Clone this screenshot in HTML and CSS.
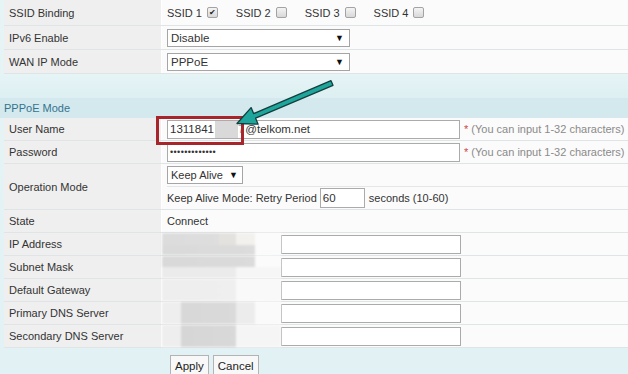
FILE: index.html
```html
<!DOCTYPE html>
<html lang="en">
<head>
    <meta charset="UTF-8">
    <title>WAN Settings</title>
    <link rel="stylesheet" href="styles.css">
</head>
<body>
    <div class="page">
        <div class="panel">
            <div class="row first">
                <div class="label">SSID Binding</div>
                <div class="value">
                    <span class="ssid">SSID 1</span><span class="cb checked">&#10004;</span>
                    <span class="ssid">SSID 2</span><span class="cb"></span>
                    <span class="ssid">SSID 3</span><span class="cb"></span>
                    <span class="ssid">SSID 4</span><span class="cb"></span>
                </div>
            </div>
            <div class="row mid">
                <div class="label">IPv6 Enable</div>
                <div class="value"><div class="sel wide"><span>Disable</span><span class="arrow">&#9660;</span></div></div>
            </div>
            <div class="row mid">
                <div class="label">WAN IP Mode</div>
                <div class="value"><div class="sel wide"><span>PPPoE</span><span class="arrow">&#9660;</span></div></div>
            </div>
        </div>

        <div class="gap"></div>
        <div class="section-title">PPPoE Mode</div>

        <div class="panel">
            <div class="row">
                <div class="label">User Name</div>
                <div class="value">
                    <div class="textbox long">1311841<span class="hidden-part"></span><span class="tail">7</span>@telkom.net</div>
                    <span class="hint"><span class="star">*</span> (You can input 1-32 characters)</span>
                </div>
            </div>
            <div class="row">
                <div class="label">Password</div>
                <div class="value">
                    <div class="textbox long"><span class="dots">&bull;&bull;&bull;&bull;&bull;&bull;&bull;&bull;&bull;&bull;&bull;&bull;&bull;</span></div>
                    <span class="hint"><span class="star">*</span> (You can input 1-32 characters)</span>
                </div>
            </div>
            <div class="row tall">
                <div class="label">Operation Mode</div>
                <div class="value stack">
                    <div class="sub">
                        <div class="sel short"><span>Keep Alive</span><span class="arrow">&#9660;</span></div>
                    </div>
                    <div class="sub">
                        Keep Alive Mode: Retry Period
                        <div class="textbox retry">60</div>
                        seconds (10-60)
                    </div>
                </div>
            </div>
            <div class="row">
                <div class="label">State</div>
                <div class="value">Connect</div>
            </div>
            <div class="row">
                <div class="label">IP Address</div>
                <div class="value flat"><div class="redact r1"></div><div class="textbox addr"></div></div>
            </div>
            <div class="row">
                <div class="label">Subnet Mask</div>
                <div class="value flat"><div class="redact r2"></div><div class="textbox addr"></div></div>
            </div>
            <div class="row">
                <div class="label">Default Gateway</div>
                <div class="value flat"><div class="redact r3"></div><div class="textbox addr"></div></div>
            </div>
            <div class="row">
                <div class="label">Primary DNS Server</div>
                <div class="value flat"><div class="redact r4"></div><div class="textbox addr"></div></div>
            </div>
            <div class="row">
                <div class="label">Secondary DNS Server</div>
                <div class="value flat"><div class="redact r5"></div><div class="textbox addr"></div></div>
            </div>
        </div>

        <div class="actions">
            <button type="button">Apply</button>
            <button type="button">Cancel</button>
        </div>

        <div class="highlight"></div>
        <svg class="pointer" width="628" height="374" viewBox="0 0 628 374">
            <polygon points="331,80.7 253.6,113.6 251.1,107.6 237,123.5 258.1,124.2 255.6,118.2 333,85.3" fill="#1ea69c" stroke="#123f3d" stroke-width="1.3" stroke-linejoin="round"/>
        </svg>
    </div>
</body>
</html>
```

FILE: styles.css
```css
body {
    margin: 0;
    font-family: "Liberation Sans", Arial, sans-serif;
    font-size: 11px;
    color: #333;
    background-color: #e4f2f4;
}
.page {
    position: relative;
    width: 628px;
    height: 374px;
    overflow: hidden;
    background: linear-gradient(#e6f4f6, #e2f1f3);
}
.panel {
    margin-left: 4px;
}
.row {
    display: grid;
    grid-template-columns: 158px 1fr;
    height: 23px;
    box-sizing: border-box;
    border-bottom: 1px solid #dfe5e7;
}
.row.first {
    height: 26px;
}
.row.mid {
    height: 24px;
}
.row.tall {
    height: 46px;
}
.label {
    display: flex;
    align-items: center;
    padding-left: 5px;
    background-color: #efefef;
    border-right: 1px solid #fff;
}
.value {
    display: flex;
    align-items: center;
    padding-left: 5px;
    background-color: #fbfbfb;
    white-space: nowrap;
}
.value.flat {
    padding-left: 0;
}
.value.stack {
    flex-direction: column;
    align-items: stretch;
}
.sub {
    flex: 1;
    display: flex;
    align-items: center;
}
.sub + .sub {
    border-top: 1px solid #e3e7e9;
}
.ssid {
    margin-right: 5px;
}
.cb {
    display: inline-flex;
    align-items: center;
    justify-content: center;
    width: 11px;
    height: 11px;
    box-sizing: border-box;
    margin-right: 18px;
    border: 1px solid #a3a3a3;
    border-radius: 2px;
    background: linear-gradient(#f4f4f4, #d8d8d8);
    font-size: 8px;
    line-height: 1;
    color: #222;
}
.sel {
    display: flex;
    align-items: center;
    justify-content: space-between;
    box-sizing: border-box;
    height: 18px;
    padding: 0 5px 0 3px;
    border: 1px solid #a5a5a5;
    background-color: #fff;
    font-size: 11.5px;
}
.sel.wide {
    width: 183px;
}
.sel.short {
    width: 76px;
    padding-right: 4px;
    font-size: 11px;
}
.arrow {
    font-size: 9px;
    color: #111;
}
.textbox {
    display: flex;
    align-items: center;
    box-sizing: border-box;
    height: 19px;
    padding-left: 2px;
    border: 1px solid #ababab;
    background-color: #fff;
    font-size: 11.5px;
}
.textbox.long {
    width: 293px;
}
.textbox.retry {
    width: 45px;
    height: 20px;
    margin: 0 4px 0 3px;
}
.textbox.addr {
    width: 180px;
    height: 19px;
}
.hidden-part {
    width: 23px;
    height: 17px;
    margin-left: 1px;
    background-color: #d9d9d9;
    filter: blur(0.6px);
}
.tail {
    margin-right: 1px;
    color: #999;
}
.dots {
    font-size: 9px;
    letter-spacing: 0.4px;
}
.hint {
    margin-left: 4px;
    color: #8a8a8a;
}
.star {
    color: #c44;
}
.redact {
    width: 119px;
    height: 100%;
    filter: blur(1.2px);
}
.r1 {
    background:
        linear-gradient(90deg, #dcdcdc 0, #dedede 57px, #e4e2de 57px, #e4e2de 74px, #f3f1ee 74px, #f3f1ee 93px, #fbfbfb 93px) top / 100% 55% no-repeat,
        linear-gradient(90deg, #dadada 0, #dcdcdc 93px, #fbfbfb 93px);
}
.r2 {
    background:
        linear-gradient(90deg, #d9d9d9 0, #dbdbdb 93px, #fbfbfb 93px) top / 100% 50% no-repeat,
        linear-gradient(90deg, #ebebeb 0, #ebebeb 74px, #f6f6f6 74px);
}
.r3 {
    background: linear-gradient(90deg, #eeeeee 0, #efefef 74px, #f9f9f9 74px);
}
.r4 {
    background: linear-gradient(90deg, #eeeeee 0, #eeeeee 19px, #d8d8d8 19px, #dadada 74px, #ececec 74px, #ececec 93px, #fafafa 93px);
}
.r5 {
    background: linear-gradient(90deg, #eeeeee 0, #eeeeee 19px, #d6d6d6 19px, #d9d9d9 74px, #f5f5f5 74px);
}
.gap {
    height: 24px;
    background: linear-gradient(#e6f4f6, #ddeff2);
}
.section-title {
    display: flex;
    align-items: center;
    height: 20px;
    padding-left: 4px;
    background-color: #d3e9ed;
    color: #35738f;
    font-size: 11px;
}
.actions {
    display: flex;
    gap: 4px;
    padding: 7px 0 0 170px;
}
button {
    height: 22px;
    padding: 0 4px;
    border: 1px solid #b3b3b3;
    border-radius: 0;
    background-color: #f8f8f8;
    font-family: "Liberation Sans", Arial, sans-serif;
    font-size: 11.5px;
    color: #222;
}
.highlight {
    position: absolute;
    left: 156px;
    top: 116px;
    width: 88px;
    height: 29px;
    box-sizing: border-box;
    border: 3px solid #a7262c;
}
.pointer {
    position: absolute;
    left: 0;
    top: 0;
    pointer-events: none;
}
```
